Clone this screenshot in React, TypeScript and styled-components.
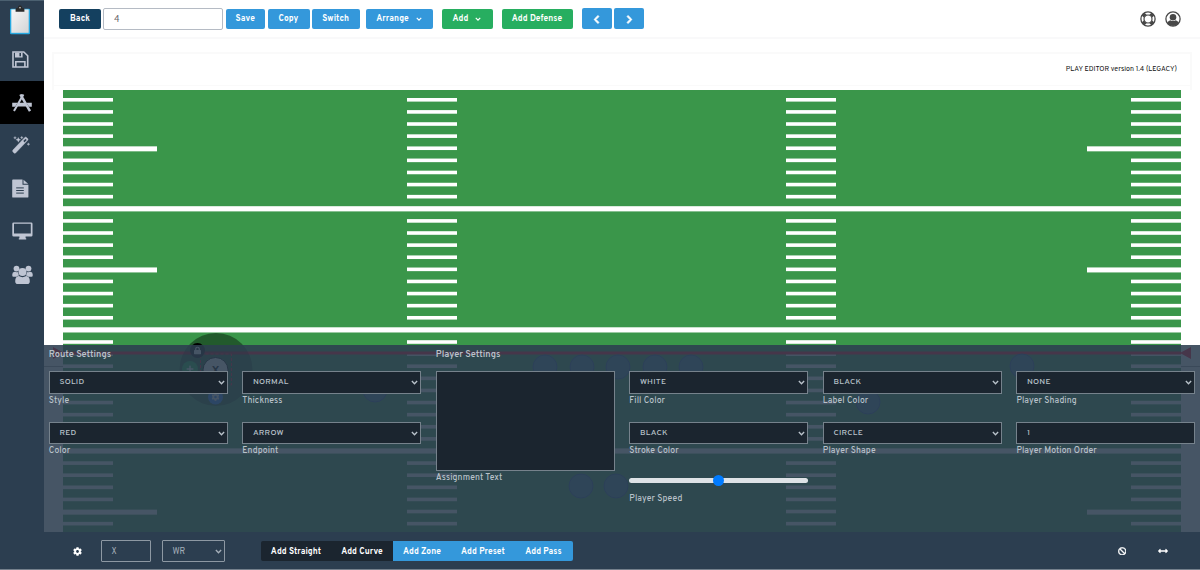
import React from "react";
import styled, { createGlobalStyle } from "styled-components";
import { FaCog, FaBan, FaArrowsAltH, FaChevronLeft, FaChevronRight, FaLock, FaPlus } from "react-icons/fa";

const GlobalStyle = createGlobalStyle`
  * {
    box-sizing: border-box;
  }

  body {
    margin: 0;
    background: #fff;
    overflow: hidden;
    font-family: "Overpass", "Roboto", "Liberation Sans", sans-serif;
  }
`;

/* ---------- icons ---------- */

const ClipboardIcon = () => (
  <svg width="22" height="31" viewBox="0 0 22 31">
    <defs>
      <linearGradient id="paper" x1="0" y1="0" x2="1" y2="1">
        <stop offset="0" stopColor="#f6f6f6" />
        <stop offset="1" stopColor="#d3d4d6" />
      </linearGradient>
    </defs>
    <rect x="1" y="3.8" width="20" height="25.4" rx="1.3" fill="#27a9e1" />
    <rect x="2.3" y="4.4" width="17.4" height="23.4" fill="url(#paper)" />
    <path d="M6.6 6.8V4.2q0-1.2 1.2-1.2h.9Q9 .3 11 .3T13.3 3h.9q1.2 0 1.2 1.2v2.6z" fill="#2b2b2b" />
    <circle cx="11" cy="2.8" r="0.8" fill="#ddd" />
  </svg>
);

const SaveIcon = () => (
  <svg width="17" height="17" viewBox="0 0 17 17" fill="none" stroke="currentColor" strokeWidth="1.6">
    <path d="M1 1h10.8L15.7 4.8V16H1z" />
    <path d="M3.8 16v-5.2h9.1V16" />
    <path d="M3 1.5h7.6v5H3z" fill="currentColor" stroke="none" />
    <path d="M7.4 2h1.6v3.2H7.4z" fill="#2c3e50" stroke="none" />
  </svg>
);

const StoreIcon = () => (
  <svg width="20" height="18" viewBox="0 0 20 18" fill="none" stroke="currentColor">
    <path d="M.2 8.8h5.4L3.2 12.8H.2zM6.2 8.8h7.2l2 3.6H4.4zM14.4 8.8h5.4v4H17z" fill="currentColor" stroke="none" />
    <path d="M11.4.4 2 17" strokeWidth="2" />
    <path d="M8.4.4 18 17.2" strokeWidth="2.5" />
  </svg>
);

const WandIcon = () => (
  <svg width="19" height="19" viewBox="0 0 19 19">
    <path
      d="M.9 14.1 12.8 1.4q.8-.8 1.7 0l1.2 1.2q.8.8 0 1.7L3.6 17q-.8.7-1.6 0L.9 15.8q-.7-.8 0-1.7zM11.1 5.1l1.4 1.4 2-2.1q.3-.4 0-.8l-.6-.6q-.4-.3-.8 0z"
      fill="currentColor"
      fillRule="evenodd"
      stroke="currentColor"
      strokeWidth=".4"
    />
    <path
      d="M6.3 1.4l.7 1.7 1.7.7-1.7.7-.7 1.7-.7-1.7-1.7-.7 1.7-.7zM3 .4l.4 1 1 .4-1 .4-.4 1-.4-1-1-.4 1-.4zM9.8.2l.4 1 1 .4-1 .4-.4 1-.4-1-1-.4 1-.4zM16.4 6.8l.4 1 1 .4-1 .4-.4 1-.4-1-1-.4 1-.4z"
      fill="currentColor"
      stroke="currentColor"
      strokeWidth=".3"
    />
  </svg>
);

const FileIcon = () => (
  <svg width="17" height="19" viewBox="0 0 17 19">
    <path d="M1 .5h9.5v5.2h5.9v12q0 .9-.9.9H1q-.8 0-.8-.9V1.3Q.2.5 1 .5z" fill="currentColor" />
    <path d="M11.5.7l4.6 4.1h-4.6z" fill="currentColor" />
    <path d="M4.2 8.9h7.6M4.2 11.5h7.6M4.2 14.1h7.6" stroke="#2c3e50" strokeWidth="1" />
  </svg>
);

const MonitorIcon = () => (
  <svg width="21" height="19" viewBox="0 0 21 19">
    <path
      d="M1.6.4h17.6q1.3 0 1.3 1.3v11.6q0 1.3-1.3 1.3h-5.6v1.6h.6v1.2H6.8v-1.2h.6v-1.6H1.6Q.3 14.6.3 13.3V1.7Q.3.4 1.6.4zM2 1.8v9.6h16.8V1.8z"
      fill="currentColor"
      fillRule="evenodd"
    />
  </svg>
);

const UsersIcon = () => (
  <svg width="21" height="20" viewBox="0 0 21 20" fill="currentColor">
    <circle cx="4.5" cy="3.6" r="2.9" />
    <circle cx="16.5" cy="3.6" r="2.9" />
    <path d="M.3 10.8V9.2Q.3 6.5 3 6.7q1.6.8 3 .2.1 2.3 1.3 3.6-1.6.1-2.6 1.2H1.4q-1.1 0-1.1-.9z" />
    <path d="M20.7 10.8V9.2q0-2.7-2.7-2.5-1.6.8-3 .2-.1 2.3-1.3 3.6 1.6.1 2.6 1.2h3.3q1.1 0 1.1-.9z" />
    <circle cx="10.5" cy="7" r="4" />
    <path d="M3.2 16.3q0-5 3.6-5.2 3.7 2.2 7.4 0 3.6.2 3.6 5.2 0 2.8-2.5 2.8H5.7q-2.5 0-2.5-2.8z" />
  </svg>
);

const RingIcon = () => (
  <svg width="16" height="16" viewBox="0 0 16 16" fill="none" stroke="#484848">
    <circle cx="8" cy="8" r="7.1" strokeWidth="1.3" />
    <circle cx="8" cy="8" r="4" strokeWidth="1.2" />
    <path d="M2.9 2.9 5.2 5.2M13.1 2.9l-2.3 2.3M2.9 13.1l2.3-2.3M13.1 13.1l-2.3-2.3" strokeWidth="4" />
  </svg>
);

const ProfileIcon = () => (
  <svg width="16" height="16" viewBox="0 0 16 16">
    <circle cx="8" cy="8" r="7.1" fill="none" stroke="#484848" strokeWidth="1.3" />
    <circle cx="8" cy="6.3" r="3.3" fill="#484848" />
    <path d="M2.3 12.2q.7-2.5 3-3 2.7 1.8 5.4 0 2.3.5 3 3Q11.4 15 8 15t-5.7-2.8z" fill="#484848" />
  </svg>
);

const Caret = ({ size = 7 }: { size?: number }) => (
  <svg width={size} height={size} viewBox="0 0 8 8" fill="none" stroke="currentColor" strokeWidth="1.6">
    <path d="M1 2.4 4 5.4l3-3" />
  </svg>
);

/* ---------- field ---------- */

const FIELD_TOP = 90;
const YARD = 12.11;
const HASHES = [0, 344, 723, 1068];

const yards = Array.from({ length: 36 }, (_, i) => i + 1);

const players = [
  [482, 277],
  [519, 277],
  [555, 277],
  [592, 277],
  [628, 277],
  [312, 300],
  [518, 396],
  [553, 396],
  [805, 312],
  [959, 276],
];

const Field = () => (
  <FieldSvg width="1156" height="480" viewBox="-19 0 1156 480">
    <rect x="0" y="0" width="1118" height="480" fill="#3a964a" />
    {yards.map((n) => {
      const y = 99.8 - FIELD_TOP + (n - 1) * YARD;
      if (n % 10 === 0) {
        return <rect key={n} x="0" y={y - 2.6} width="1118" height="5.2" fill="#fff" />;
      }
      if (n % 5 === 0) {
        return (
          <g key={n} fill="#fff">
            <rect x="0" y={y - 1.9} width="94" height="5" />
            <rect x="1024" y={y - 1.9} width="94" height="5" />
            <rect x="344" y={y - 1.8} width="50" height="3.6" />
            <rect x="723" y={y - 1.8} width="50" height="3.6" />
          </g>
        );
      }
      return (
        <g key={n} fill="#fff">
          {HASHES.map((x) => (
            <rect key={x} x={x} y={y - 1.8} width="50" height="3.6" />
          ))}
        </g>
      );
    })}

    {/* line of scrimmage */}
    <path d="M0 263h1118" stroke="#ff0020" strokeWidth="3" />
    <path d="M-10 257l11 6-11 6zM1128 257l-11 6 11 6z" fill="#ff0020" />
    <path d="M-19 276.5H0M1118 276.5h19" stroke="#999" />

    {players.map(([x, y]) => (
      <circle key={x} cx={x} cy={y} r="12" fill="#4a6fa8" fillOpacity=".75" stroke="#2b4f98" />
    ))}

    {/* selected player with its radial menu */}
    <circle cx="153" cy="279.5" r="36.5" fill="#000" fillOpacity=".4" />
    <rect x="137.5" y="264" width="31" height="31" fill="none" stroke="#ff0020" strokeDasharray="3 2" />
    <circle cx="152.5" cy="280" r="12.5" fill="#fff" stroke="#000" />
    <text x="152.5" y="284" fontSize="12" fontWeight="700" textAnchor="middle">
      X
    </text>
    <circle cx="134.5" cy="260.5" r="7.5" fill="#000" />
    <FaLock x="130.5" y="256.5" size="8" color="#fff" />
    <circle cx="127" cy="279" r="8" fill="#18b84b" />
    <FaPlus x="123" y="275" size="8" color="#fff" />
    <circle cx="152.5" cy="307" r="7.5" fill="#2f80ff" />
    <FaCog x="148.5" y="303" size="8" color="#fff" />
  </FieldSvg>
);

/* ---------- form parts ---------- */

interface SelectFieldProps {
  label: string;
  value: string;
}

const SelectField = ({ label, value }: SelectFieldProps) => (
  <FieldGroup>
    <DarkBox>
      {value}
      <Caret />
    </DarkBox>
    <Label>{label}</Label>
  </FieldGroup>
);

const navItems = [
  { name: "save", icon: <SaveIcon /> },
  { name: "editor", icon: <StoreIcon />, active: true },
  { name: "wizard", icon: <WandIcon /> },
  { name: "documents", icon: <FileIcon /> },
  { name: "present", icon: <MonitorIcon /> },
  { name: "team", icon: <UsersIcon /> },
];

const App = () => {
  const [speed] = React.useState(50);

  return (
    <>
      <GlobalStyle />
      <StyledPage>
        <Sidebar>
          <Logo>
            <ClipboardIcon />
          </Logo>
          {navItems.map((item) => (
            <NavItem key={item.name} $active={item.active}>
              {item.icon}
            </NavItem>
          ))}
        </Sidebar>

        <Main>
          <Toolbar>
            <Button $color="#14405f" $width={42}>Back</Button>
            <NameInput defaultValue="4" />
            <Button $width={39.5}>Save</Button>
            <Button $width={42}>Copy</Button>
            <Button $width={47.5}>Switch</Button>
            <Button $width={67} $left={3.5}>
              Arrange
              <Caret size={6} />
            </Button>
            <Button $color="#27ae60" $width={51} $left={6.5}>
              Add
              <Caret size={6} />
            </Button>
            <Button $color="#27ae60" $width={71} $left={6.5}>Add Defense</Button>
            <Button $width={30} $left={6.5} $tall>
              <FaChevronLeft size={9} strokeWidth={50} stroke="#fff" />
            </Button>
            <Button $width={30} $tall>
              <FaChevronRight size={9} strokeWidth={50} stroke="#fff" />
            </Button>
            <Account>
              <RingIcon />
              <ProfileIcon />
            </Account>
          </Toolbar>

          <Canvas>
            <Card>
              <CardHeader>PLAY EDITOR version 1.4 (LEGACY)</CardHeader>
            </Card>
            <Field />
          </Canvas>

          <Overlay>
            <Settings>
              <Column>
                <Heading>Route Settings</Heading>
                <SelectField label="Style" value="SOLID" />
                <SelectField label="Color" value="RED" />
              </Column>
              <Column>
                <Heading />
                <SelectField label="Thickness" value="NORMAL" />
                <SelectField label="Endpoint" value="ARROW" />
              </Column>
              <Column>
                <Heading>Player Settings</Heading>
                <TextArea />
                <Label>Assignment Text</Label>
              </Column>
              <Column>
                <Heading />
                <SelectField label="Fill Color" value="WHITE" />
                <SelectField label="Stroke Color" value="BLACK" />
                <Track>
                  <Thumb style={{ marginLeft: `calc(${speed}% - 6px)` }} />
                </Track>
                <Label>Player Speed</Label>
              </Column>
              <Column>
                <Heading />
                <SelectField label="Label Color" value="BLACK" />
                <SelectField label="Player Shape" value="CIRCLE" />
              </Column>
              <Column>
                <Heading />
                <SelectField label="Player Shading" value="NONE" />
                <FieldGroup>
                  <DarkBox>1</DarkBox>
                  <Label>Player Motion Order</Label>
                </FieldGroup>
              </Column>
            </Settings>

            <BottomBar>
              <FaCog size={9} />
              <PlainBox $width={50} $left={19}>X</PlainBox>
              <PlainBox $width={63} $left={11}>
                WR
                <Caret />
              </PlainBox>
              <ButtonGroup>
                <GroupButton $dark $width={71}>Add Straight</GroupButton>
                <GroupButton $dark $width={61}>Add Curve</GroupButton>
                <GroupButton $width={59}>Add Zone</GroupButton>
                <GroupButton $width={63}>Add Preset</GroupButton>
                <GroupButton $width={58}>Add Pass</GroupButton>
              </ButtonGroup>
              <BarActions>
                <FaBan size={8.5} strokeWidth={20} stroke="#fff" />
                <FaArrowsAltH size={10} />
              </BarActions>
            </BottomBar>
          </Overlay>
        </Main>
      </StyledPage>
    </>
  );
};

const StyledPage = styled.div`
  display: flex;
  height: 570px;
  overflow: hidden;
`;

const Sidebar = styled.nav`
  width: 43.5px;
  flex: none;
  background: #2c3e50;
  border-top: 1px solid #4b6070;
  border-bottom: 1px solid #75808c;
`;

const Logo = styled.div`
  height: 37px;
  padding: 4px 0 0 9px;
`;

const NavItem = styled.div<{ $active?: boolean }>`
  display: flex;
  align-items: center;
  height: 43px;
  padding-left: 12px;
  color: #bfc5d3;
  background: ${(p) => (p.$active ? "#000" : "transparent")};
`;

const Main = styled.main`
  position: relative;
  flex: 1;
  min-width: 0;
`;

const Toolbar = styled.header`
  display: flex;
  align-items: center;
  gap: 2.5px;
  height: 39px;
  padding-left: 15.5px;
  border-bottom: 2px solid #f9f9fa;
`;

const Button = styled.button<{ $color?: string; $width: number; $left?: number; $tall?: boolean }>`
  display: flex;
  align-items: center;
  justify-content: center;
  gap: 7px;
  width: ${(p) => p.$width}px;
  height: ${(p) => (p.$tall ? 21 : 20)}px;
  margin-left: ${(p) => p.$left || 0}px;
  padding: 1px 0 0;
  border: 0;
  border-radius: 2px;
  background: ${(p) => p.$color || "#3498db"};
  color: #fff;
  font: inherit;
  font-size: 8.4px;
  font-weight: 700;
  letter-spacing: 0.1px;
  white-space: nowrap;
`;

const NameInput = styled.input`
  width: 120px;
  height: 22px;
  margin-left: -0.5px;
  padding: 1px 10px 0;
  border: 1px solid #b5bbc4;
  border-radius: 2px;
  color: #666;
  font: inherit;
  font-size: 9px;
`;

const Account = styled.div`
  display: flex;
  gap: 9px;
  margin-left: auto;
  padding-right: 19px;
`;

const Canvas = styled.section`
  display: flex;
  flex-direction: column;
`;

const Card = styled.div`
  height: 38px;
  margin: 13px 8px 0;
  border: 2px solid #fafafa;
  border-bottom: 0;
`;

const CardHeader = styled.div`
  height: 32px;
  padding: 0 13px;
  border-bottom: 1px solid #fafafa;
  color: #111;
  font-size: 7.1px;
  line-height: 32px;
  text-align: right;
`;

const FieldSvg = styled.svg`
  display: block;
  flex: none;
`;

const Overlay = styled.div`
  position: absolute;
  left: 0;
  right: 0;
  bottom: 0;
  height: 225px;
  color: #b9c2ca;
`;

const Settings = styled.div`
  display: grid;
  grid-template-columns: repeat(6, 1fr);
  gap: 14.8px;
  height: 187px;
  padding: 0 4.9px 0 5.3px;
  background: rgba(44, 62, 80, 0.88);
`;

const Column = styled.div`
  min-width: 0;
`;

const Heading = styled.div`
  height: 26px;
  font-size: 9.2px;
  font-weight: 600;
  line-height: 20px;
`;

const FieldGroup = styled.div`
  height: 50.8px;
`;

const DarkBox = styled.div`
  display: flex;
  align-items: center;
  justify-content: space-between;
  height: 22.5px;
  padding: 0 2px 0 9.6px;
  border: 1px solid #76828c;
  background: #1b252f;
  font-size: 8.3px;
  font-weight: 500;
  letter-spacing: 0.25px;
`;

const Label = styled.div`
  font-size: 8.6px;
  font-weight: 500;
  line-height: 13px;
  letter-spacing: 0.1px;
`;

const TextArea = styled.textarea`
  display: block;
  width: 100%;
  height: 99.5px;
  border: 1px solid #76828c;
  background: #1b252f;
  resize: none;
`;

const Track = styled.div`
  display: flex;
  align-items: center;
  height: 5px;
  margin: 5px 0 9px;
  border-radius: 3px;
  background: #dee2e6;
`;

const Thumb = styled.div`
  width: 11px;
  height: 11px;
  border-radius: 50%;
  background: #007bff;
`;

const BottomBar = styled.footer`
  display: flex;
  align-items: center;
  height: 38px;
  padding: 1px 0 0 29px;
  border-bottom: 1px solid #75808c;
  background: #2c3e50;
  color: #fff;
`;

const PlainBox = styled.div<{ $width: number; $left: number }>`
  display: flex;
  align-items: center;
  justify-content: space-between;
  width: ${(p) => p.$width}px;
  height: 22px;
  margin-left: ${(p) => p.$left}px;
  padding: 0 2px 0 10px;
  border: 1px solid #8d98a3;
  border-radius: 1px;
  color: #a5afb9;
  font-size: 8.5px;
`;

const ButtonGroup = styled.div`
  display: flex;
  margin-left: 36px;
  border-radius: 2px;
  overflow: hidden;
`;

const GroupButton = styled.button<{ $dark?: boolean; $width: number }>`
  width: ${(p) => p.$width}px;
  height: 20px;
  padding: 1px 0 0;
  border: 0;
  background: ${(p) => (p.$dark ? "#1b252f" : "#3498db")};
  color: #fff;
  font: inherit;
  font-size: 8.4px;
  font-weight: 700;
  letter-spacing: 0.1px;
  white-space: nowrap;
`;

const BarActions = styled.div`
  display: flex;
  align-items: center;
  gap: 32px;
  margin-left: auto;
  padding-right: 32px;
`;

export default App;
